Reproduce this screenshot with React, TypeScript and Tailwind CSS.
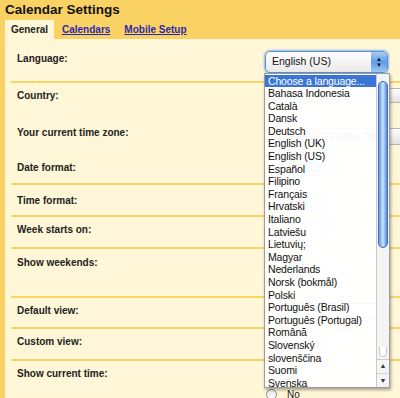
import React from 'react';

const languages = [
  'Bahasa Indonesia',
  'Català',
  'Dansk',
  'Deutsch',
  'English (UK)',
  'English (US)',
  'Español',
  'Filipino',
  'Français',
  'Hrvatski',
  'Italiano',
  'Latviešu',
  'Lietuvių;',
  'Magyar',
  'Nederlands',
  'Norsk (bokmål)',
  'Polski',
  'Português (Brasil)',
  'Português (Portugal)',
  'Română',
  'Slovenský',
  'slovenščina',
  'Suomi',
  'Svenska',
];

const Label: React.FC<{ text: string; pt: string }> = ({ text, pt }) => (
  <div className={`w-[249px] flex-none pl-[6px] text-[10px] font-bold leading-[12px] text-[#222] ${pt}`}>{text}</div>
);

const GraySelect: React.FC<{ text: string; className?: string }> = ({ text, className }) => (
  <div className={`flex h-[15px] items-center rounded-[3px] border border-[#b5b5b5] bg-gradient-to-b from-white to-[#e2e2e2] pl-[5px] text-[10px] text-[#333] ${className ?? ''}`}>
    {text}
  </div>
);

const Stepper: React.FC<{ text: string; w: string }> = ({ text, w }) => (
  <div className={`flex h-[16px] items-center justify-between rounded-[4px] border border-[#9ab7e0] bg-white pl-[5px] text-[10px] text-[#333] ${w}`}>
    <span>{text}</span>
    <span className="flex h-full w-[14px] flex-col items-center justify-center border-l border-[#c8d6ee] text-[5px] leading-[6px] text-[#666]">
      <span>▲</span>
      <span>▼</span>
    </span>
  </div>
);

const Radio: React.FC<{ text: string }> = ({ text }) => (
  <div className="flex h-[14px] items-center gap-[10px] text-[10px] text-[#222]">
    <span className="h-[11px] w-[11px] rounded-full border border-[#8d8d8d] bg-gradient-to-b from-[#e8e8e8] to-white" />
    {text}
  </div>
);

export default function App() {
  return (
    <div className="relative h-[398px] w-[400px] overflow-hidden bg-[#fad163] font-['Liberation_Sans',Arial,sans-serif]">
      {/* header */}
      <div className="h-[20px] pl-[5px] pt-[1px] text-[13.5px] font-bold leading-[17px] text-[#111]">Calendar Settings</div>
      <div className="flex h-[19px] items-stretch text-[10px] font-bold">
        <div className="ml-[5px] flex w-[49px] items-center justify-center bg-[#fff7d7] text-[#222]">General</div>
        <a className="ml-[8px] flex items-center text-[#2a2ab0] underline">Calendars</a>
        <a className="ml-[14px] flex items-center text-[#2a2ab0] underline">Mobile Setup</a>
      </div>

      {/* content */}
      <div className="ml-[5px] h-[359px] bg-[#fff7d7] pl-[6px]">
        <div className="flex h-[44px] border-b-2 border-[#fbd468]">
          <Label text="Language:" pt="pt-[14px]" />
          <div className="pt-[12px] pl-[5px]">
            <div className="flex h-[22px] w-[123px] items-stretch overflow-hidden rounded-[5px] border border-[#5b8fd6] bg-gradient-to-b from-white to-[#e9e9e9] shadow-[0_0_2px_1px_#8fb6ea]">
              <span className="flex flex-1 items-center pl-[6px] text-[10.5px] text-[#111]">English (US)</span>
              <span className="flex w-[16px] flex-col items-center justify-center bg-gradient-to-b from-[#a9cdf5] via-[#5d9be6] to-[#9cc7f4] text-[6px] leading-[6px] text-[#111]">
                <span>▲</span>
                <span>▼</span>
              </span>
            </div>
          </div>
        </div>

        <div className="flex h-[102px] border-b-2 border-[#fbd468]">
          <div className="flex w-[249px] flex-none flex-col">
            <Label text="Country:" pt="pt-[7px]" />
            <Label text="Your current time zone:" pt="pt-[25px]" />
            <Label text="Date format:" pt="pt-[23px]" />
          </div>
          <div className="flex flex-1 flex-col pl-[5px]">
            <GraySelect text="United States" className="mt-[5px] w-[160px]" />
            <GraySelect text="(GMT-08:00) Pacific Time" className="mt-[25px] h-[17px] w-[160px]" />
            <Stepper text="12/31/2008" w="w-[78px] mt-[15px]" />
          </div>
        </div>

        <div className="flex h-[32px] border-b-2 border-[#fbd468]">
          <Label text="Time format:" pt="pt-[10px]" />
          <div className="pl-[5px] pt-[8px]">
            <Stepper text="1:00pm" w="w-[60px]" />
          </div>
        </div>

        <div className="flex h-[32px] border-b-2 border-[#fbd468]">
          <Label text="Week starts on:" pt="pt-[7px]" />
          <div className="pl-[5px] pt-[6px]">
            <Stepper text="Sunday" w="w-[67px]" />
          </div>
        </div>

        <div className="flex h-[49px] border-b-2 border-[#fbd468]">
          <Label text="Show weekends:" pt="pt-[8px]" />
          <div className="flex flex-col gap-[2px] pl-[6px] pt-[7px]">
            <Radio text="Yes" />
            <Radio text="No" />
          </div>
        </div>

        <div className="flex h-[31px] border-b-2 border-[#fbd468]">
          <Label text="Default view:" pt="pt-[7px]" />
          <div className="pl-[5px] pt-[5px]">
            <div className="flex h-[16px] w-[124px] items-stretch overflow-hidden rounded-[4px] border border-[#6d9ad8] bg-white">
              <span className="flex-1 pl-[5px] text-[10px] leading-[14px] text-[#333]">Week</span>
              <span className="w-[8px] bg-gradient-to-b from-[#8ab8ef] to-[#3f7fd4]" />
            </div>
          </div>
        </div>

        <div className="flex h-[32px] border-b-2 border-[#fbd468]">
          <Label text="Custom view:" pt="pt-[7px]" />
          <div className="pl-[5px] pt-[7px]">
            <Stepper text="4 days" w="w-[60px]" />
          </div>
        </div>

        <div className="flex h-[38px]">
          <Label text="Show current time:" pt="pt-[7px]" />
          <div className="flex flex-col gap-[1px] pl-[6px] pt-[11px]">
            <Radio text="Yes" />
            <Radio text="No" />
          </div>
        </div>
      </div>

      {/* open language menu */}
      <div className="absolute left-[264px] top-[73px] h-[315px] w-[126px] border border-[#9c9c9c] bg-white/[0.95] shadow-[1px_2px_3px_rgba(0,0,0,0.35)]">
        <div className="pr-[13px] pt-[0.5px] text-[10.5px] leading-[12.6px] tracking-[-0.15px] text-[#111]">
          <div className="h-[12.6px] whitespace-nowrap bg-[#3a75d6] pl-[3px] text-white">Choose a language...</div>
          {languages.map((l) => (
            <div key={l} className="h-[12.6px] whitespace-nowrap pl-[3px]">{l}</div>
          ))}
        </div>
        {/* scrollbar */}
        <div className="absolute right-0 top-0 flex h-full w-[13px] flex-col border-l border-[#c9c9c9] bg-[#f4f4f4]">
          <div className="relative flex-1 border-b border-[#c9c9c9]">
            <div className="absolute left-[1px] right-[1px] top-[7px] h-[167px] rounded-full border border-[#3c6fbf] bg-gradient-to-r from-[#5e96e4] via-[#cfe3fb] to-[#4f88db]" />
            <div className="absolute bottom-[2px] left-[2px] right-[2px] h-[10px] rounded-b-full border border-t-0 border-[#c9c9c9] bg-white" />
          </div>
          <div className="flex h-[27px] flex-col items-center justify-around text-[7px] leading-[8px] text-[#333]">
            <span>▲</span>
            <span className="h-px w-full bg-[#d6d6d6]" />
            <span>▼</span>
          </div>
        </div>
      </div>
    </div>
  );
}
